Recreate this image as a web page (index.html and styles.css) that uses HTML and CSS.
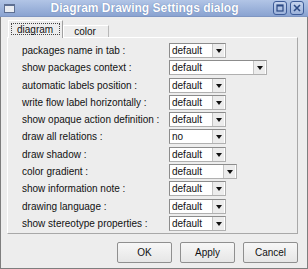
FILE: index.html
```html
<!DOCTYPE html>
<html lang="en">
  <head>
    <meta charset="UTF-8" />
    <title>Diagram Drawing Settings dialog</title>
    <link rel="stylesheet" href="styles.css">
  </head>
  <body>
    <div class="window">
      <div class="titlebar">
        <span class="appicon"></span>
        <span class="title">Diagram Drawing Settings dialog</span>
        <span class="wbtn">
          <svg width="14" height="14" viewBox="0 0 14 14"><rect x="4" y="4" width="6" height="6" fill="none" stroke="#2c4a85" stroke-width="1.2"/><rect x="4" y="4" width="6" height="1.5" fill="#2c4a85"/></svg>
        </span>
        <span class="wbtn">
          <svg width="14" height="14" viewBox="0 0 14 14"><path d="M4 4 L10 10 M10 4 L4 10" stroke="#2c4a85" stroke-width="1.6"/></svg>
        </span>
      </div>
      <div class="content">
        <div class="tabs">
          <div class="tab active"><span class="focus">diagram</span></div>
          <div class="tab">color</div>
        </div>
        <div class="pane">
          <div class="row"><span>packages name in tab :</span><span class="combo">default<i></i></span></div>
          <div class="row"><span>show packages context :</span><span class="combo wide">default<i></i></span></div>
          <div class="row"><span>automatic labels position :</span><span class="combo">default<i></i></span></div>
          <div class="row"><span>write flow label horizontally :</span><span class="combo">default<i></i></span></div>
          <div class="row"><span>show opaque action definition :</span><span class="combo">default<i></i></span></div>
          <div class="row"><span>draw all relations :</span><span class="combo">no<i></i></span></div>
          <div class="row"><span>draw shadow :</span><span class="combo">default<i></i></span></div>
          <div class="row"><span>color gradient :</span><span class="combo mid">default<i></i></span></div>
          <div class="row"><span>show information note :</span><span class="combo">default<i></i></span></div>
          <div class="row"><span>drawing language :</span><span class="combo">default<i></i></span></div>
          <div class="row"><span>show stereotype properties :</span><span class="combo">default<i></i></span></div>
        </div>
        <div class="buttons">
          <button>OK</button>
          <button>Apply</button>
          <button>Cancel</button>
        </div>
      </div>
    </div>
  </body>
</html>
```

FILE: styles.css
```css
* {
  box-sizing: border-box;
  margin: 0;
}
body {
  background: #ededed;
  font-family: "Liberation Sans", Arial, sans-serif;
  font-size: 10px;
  color: #111;
}
.window {
  width: 308px;
  height: 269px;
  border: 1px solid #7e7e7e;
  border-top: none;
  background: #ededed;
  display: flex;
  flex-direction: column;
}
.titlebar {
  height: 17px;
  margin: 0 -1px;
  background: linear-gradient(#b2c5e6, #8aa3d1);
  border-bottom: 1px solid #7f96c2;
  display: flex;
  align-items: center;
  padding: 0 4px 0 4px;
}
.appicon {
  width: 11px;
  height: 9px;
  border: 1px solid #5d6f92;
  border-top-width: 2px;
  background: #e8ecf2;
  margin-top: 1px;
}
.title {
  flex: 1;
  text-align: center;
  color: #fff;
  font-weight: bold;
  font-size: 12px;
  text-shadow: 0 0 1px #5570a6;
  padding-left: 4px;
}
.wbtn {
  width: 14px;
  height: 14px;
  border: 1px solid #3e5c98;
  border-radius: 3px;
  background: linear-gradient(#c5d3ec, #9cb2da);
  margin-left: 3px;
  display: flex;
}
.wbtn svg {
  margin: -1px;
}
.content {
  flex: 1;
  display: flex;
  flex-direction: column;
  padding: 3px 9px 0 6px;
}
.tabs {
  display: flex;
  align-items: flex-end;
  height: 17px;
  padding-left: 1px;
  position: relative;
  z-index: 1;
}
.tab {
  height: 12px;
  padding: 0 12px 0 10px;
  border: 1px solid #b8b8b8;
  border-left-color: #fff;
  border-top-color: #fff;
  border-bottom: none;
  display: flex;
  align-items: center;
  line-height: 11px;
}
.tab.active {
  height: 17px;
  padding: 2px 2px 0 2px;
  background: #ededed;
  border-right-color: #a0a0a0;
  margin-bottom: -1px;
  height: 18px;
  align-items: flex-start;
}
.focus {
  border: 1px dotted #444;
  padding: 0 6px 0 5px;
  height: 12px;
  line-height: 11px;
}
.pane {
  height: 197px;
  border: 1px solid #fff;
  border-right-color: #a8a8a8;
  border-bottom-color: #a8a8a8;
  padding: 5px 0 0 14px;
  display: flex;
  flex-direction: column;
  gap: 2.3px;
}
.row {
  display: grid;
  grid-template-columns: 147px auto;
  align-items: center;
  height: 15px;
}
.combo {
  width: 57px;
  height: 15px;
  background: #fff;
  border: 1px solid #b0b0b0;
  border-top-color: #8c8c8c;
  border-left-color: #8c8c8c;
  padding-left: 2px;
  line-height: 13px;
  position: relative;
}
.combo.wide {
  width: 98px;
}
.combo.mid {
  width: 68px;
}
.combo i {
  position: absolute;
  right: 1px;
  top: 0;
  width: 12px;
  height: 13px;
  background: #ececec;
  border-left: 1px solid #c4c4c4;
}
.combo i::after {
  content: "";
  position: absolute;
  left: 3px;
  top: 5px;
  border-left: 3px solid transparent;
  border-right: 3px solid transparent;
  border-top: 4px solid #111;
}
.buttons {
  display: flex;
  justify-content: flex-end;
  gap: 8px;
  margin-top: 8px;
}
button {
  width: 55px;
  height: 21px;
  font-family: "Liberation Sans", Arial, sans-serif;
  font-size: 10px;
  color: #111;
  background: linear-gradient(#f7f7f7, #e6e6e6);
  border: 1px solid #8f8f8f;
  border-radius: 2px;
}
```
